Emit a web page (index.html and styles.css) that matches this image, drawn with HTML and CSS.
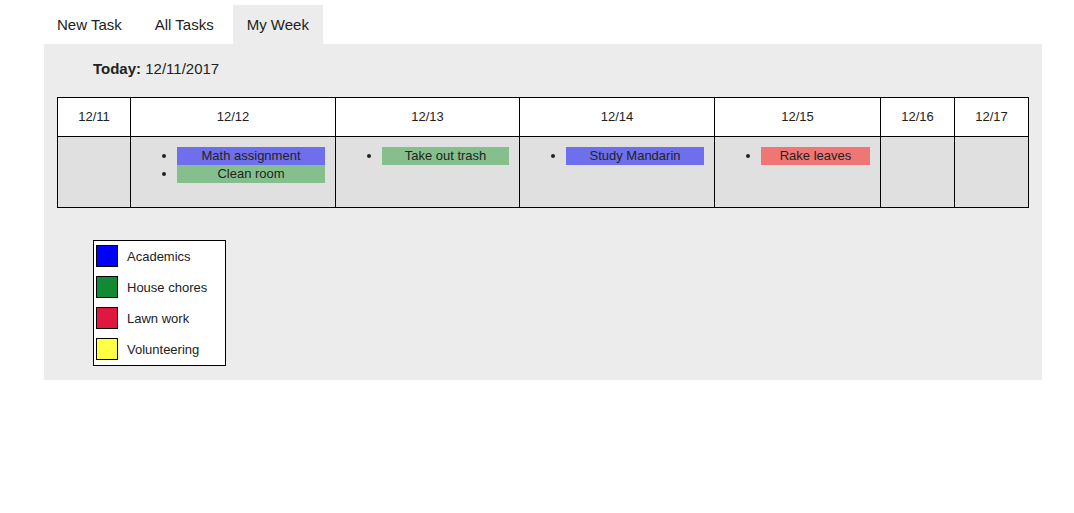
FILE: index.html
```html
<!DOCTYPE html>
<html>
<head>
<meta charset="utf-8">
<link rel="stylesheet" href="styles.css">
</head>
<body>
<nav class="tabs">
  <div class="tab">New Task</div>
  <div class="tab">All Tasks</div>
  <div class="tab active">My Week</div>
</nav>
<section class="panel">
  <div class="today"><b>Today:</b> 12/11/2017</div>
  <div class="week">
    <div class="head">12/11</div>
    <div class="head">12/12</div>
    <div class="head">12/13</div>
    <div class="head">12/14</div>
    <div class="head">12/15</div>
    <div class="head">12/16</div>
    <div class="head">12/17</div>
    <div class="day"></div>
    <div class="day"><ul><li><span class="task academics">Math assignment</span></li><li><span class="task chores">Clean room</span></li></ul></div>
    <div class="day"><ul><li><span class="task chores">Take out trash</span></li></ul></div>
    <div class="day"><ul><li><span class="task academics">Study Mandarin</span></li></ul></div>
    <div class="day"><ul><li><span class="task lawn">Rake leaves</span></li></ul></div>
    <div class="day"></div>
    <div class="day"></div>
  </div>
  <div class="legend">
    <div class="legend-row"><span class="swatch sw-academics"></span>Academics</div>
    <div class="legend-row"><span class="swatch sw-chores"></span>House chores</div>
    <div class="legend-row"><span class="swatch sw-lawn"></span>Lawn work</div>
    <div class="legend-row"><span class="swatch sw-volunteer"></span>Volunteering</div>
  </div>
</section>
</body>
</html>
```
FILE: styles.css
```css
body {
  margin: 0;
  font-family: "Liberation Sans", Arial, sans-serif;
  color: #222;
  background: #fff;
}
.tabs {
  display: flex;
  gap: 5px;
  margin: 5px 0 0 43px;
}
.tab {
  padding: 0 14px;
  height: 39px;
  line-height: 39px;
  font-size: 15px;
}
.tab.active {
  background: #ececec;
}
.panel {
  margin-left: 44px;
  width: 998px;
  box-sizing: border-box;
  background: #ececec;
  padding: 16px 14px 14px 13px;
}
.today {
  margin-left: 36px;
  font-size: 15px;
  line-height: 18px;
  margin-bottom: 19px;
}
.week {
  display: grid;
  grid-template-columns: 72px 204px 183px 194px 165px 73px 73px;
  grid-template-rows: 38px 70px;
  gap: 1px;
  border: 1px solid #000;
  background: #000;
  width: 972px;
  box-sizing: border-box;
}
.head {
  background: #fff;
  font-size: 13px;
  display: flex;
  align-items: center;
  justify-content: center;
  padding-bottom: 2px;
}
.day {
  background: #e0e0e0;
  padding: 10px 10px 0 0;
}
.day ul {
  margin: 0;
  padding-left: 46px;
}
.day li {
  font-size: 13px;
  line-height: 18px;
}
.task {
  display: block;
  text-align: center;
  height: 18px;
}
.task.academics { background: #6f6fee; }
.task.chores { background: #86bf8e; }
.task.lawn { background: #f07676; }
.legend {
  margin: 32px 0 0 36px;
  width: 133px;
  box-sizing: border-box;
  background: #fff;
  border: 1px solid #000;
  padding: 4px 2px 5px;
  display: flex;
  flex-direction: column;
  gap: 9px;
}
.legend-row {
  display: flex;
  align-items: center;
  gap: 9px;
  height: 22px;
  font-size: 13px;
}
.swatch {
  width: 22px;
  height: 22px;
  box-sizing: border-box;
  border: 1px solid #000;
}
.sw-academics { background: #0000ff; }
.sw-chores { background: #128a34; }
.sw-lawn { background: #e0173f; }
.sw-volunteer { background: #ffff44; }
```
